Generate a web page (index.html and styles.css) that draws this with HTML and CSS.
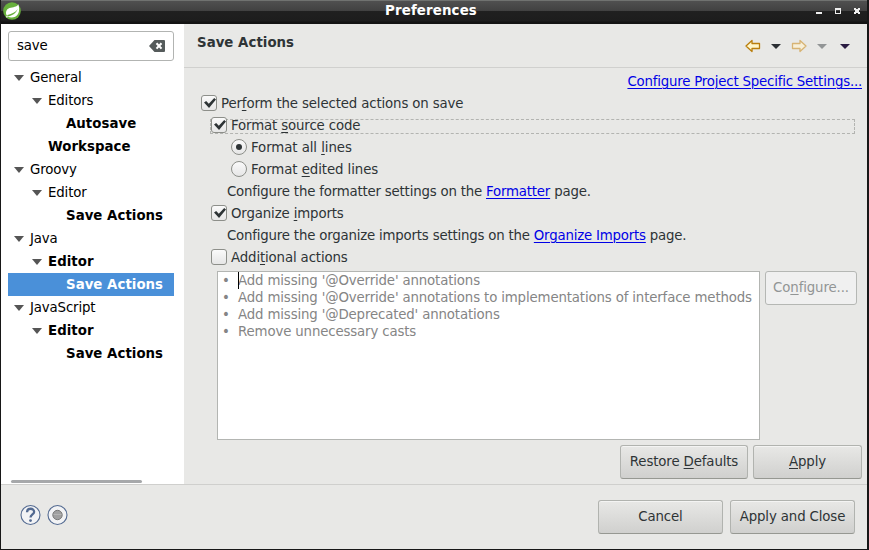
FILE: index.html
```html
<!DOCTYPE html>
<html lang="en">
<head>
<meta charset="utf-8">
<title>Preferences</title>
<link rel="stylesheet" href="styles.css">
</head>
<body>
<div class="window">
  <header class="titlebar">
    <svg class="logo" width="18" height="18" viewBox="0 0 18 18"><circle cx="9" cy="9" r="8.8" fill="#68b03c"/><path d="M15.3 2.2C14 5 10 5 6.500 6C2.500 7.500 2 12 4.600 14.500C8 16.500 13 15.600 15 12C16.700 9 16.300 5 15.300 2.200Z" fill="#fff"/><path d="M4 14.600C9 14 13 11.500 14.700 7C12.500 10.300 9 12 4.500 13Z" fill="#68b03c"/><circle cx="3.900" cy="14.700" r=".8" fill="#fff"/></svg>
    <h1>Preferences</h1>
    <svg class="controls" width="46" height="8" viewBox="0 0 46 8" shape-rendering="crispEdges"><path d="M0 5h6v2H0z" fill="#eee"/><path d="M19 1h6v6h-6zM20 3v3h4V3z" fill="#eee" fill-rule="evenodd"/><path d="M38 1h2v1h2V1h2v2h-1v2h1v2h-2V6h-2v1h-2V5h1V3h-1z" fill="#eee"/></svg>
  </header>
  <div class="body">
    <aside class="sidebar">
      <div class="search"><span>save</span>
        <svg width="16" height="12" viewBox="0 0 16 12"><path d="M5.500 0H15q1 0 1 1v10q0 1-1 1H5.500L0 6z" fill="#555b5b"/><path d="M7.500 3.200l5 5.400M12.500 3.200l-5 5.400" stroke="#fff" stroke-width="2.100"/></svg>
      </div>
      <ul class="tree">
        <li class="l1"><i></i><span>General</span></li>
        <li class="l2"><i></i><span>Editors</span></li>
        <li class="l3 bold"><span>Autosave</span></li>
        <li class="l2 leaf bold"><span>Workspace</span></li>
        <li class="l1"><i></i><span>Groovy</span></li>
        <li class="l2"><i></i><span>Editor</span></li>
        <li class="l3 bold"><span>Save Actions</span></li>
        <li class="l1"><i></i><span>Java</span></li>
        <li class="l2 bold"><i></i><span>Editor</span></li>
        <li class="l3 bold selected"><span>Save Actions</span></li>
        <li class="l1"><i></i><span>JavaScript</span></li>
        <li class="l2 bold"><i></i><span>Editor</span></li>
        <li class="l3 bold"><span>Save Actions</span></li>
      </ul>
      <div class="scrollbar"></div>
    </aside>
    <main class="page">
      <div class="page-head">
        <h2>Save Actions</h2>
        <svg class="nav" width="106" height="14" viewBox="0 0 106 14"><path d="M1 7L7 1.500V4.500H14.500V9.500H7V12.500Z" fill="#fff6ca" stroke="#b97d0c" stroke-width="1.300" stroke-linejoin="round"/><path d="M26 5h10l-5 5z" fill="#2b2f33"/><path d="M61 7L55 1.500V4.500H47.500V9.500H55V12.500Z" fill="#f7efd8" stroke="#d7b373" stroke-width="1.300" stroke-linejoin="round"/><path d="M72 5h10l-5 5z" fill="#929596"/><path d="M95 5h10l-5 5z" fill="#2a1c42"/></svg>
      </div>
      <div class="project"><a>Configure Project Specific Settings...</a></div>
      <div class="options">
        <label class="row"><b class="check on"></b><span>Per<u>f</u>orm the selected actions on save</span></label>
        <label class="row in focus"><b class="check on"></b><span>Format <u>s</u>ource code</span></label>
        <label class="row in2"><b class="radio on"></b><span>Format all <u>l</u>ines</span></label>
        <label class="row in2"><b class="radio"></b><span>Format <u>e</u>dited lines</span></label>
        <p class="row note"><span>Configure the formatter settings on the <a>Formatter</a> page.</span></p>
        <label class="row in"><b class="check on"></b><span>Organize <u>i</u>mports</span></label>
        <p class="row note"><span>Configure the organize imports settings on the <a>Organize Imports</a> page.</span></p>
        <label class="row in"><b class="check"></b><span>Addi<u>t</u>ional actions</span></label>
      </div>
      <div class="extra">
        <ul class="actions">
          <li class="caret">Add missing '@Override' annotations</li>
          <li>Add missing '@Override' annotations to implementations of interface methods</li>
          <li>Add missing '@Deprecated' annotations</li>
          <li>Remove unnecessary casts</li>
        </ul>
        <button class="btn configure" disabled><span>Co<u>n</u>figure...</span></button>
      </div>
      <div class="page-buttons">
        <button class="btn restore"><span>Restore <u>D</u>efaults</span></button>
        <button class="btn apply"><span><u>A</u>pply</span></button>
      </div>
    </main>
  </div>
  <footer class="footer">
    <svg class="help" width="48" height="22" viewBox="0 0 48 22"><g fill="#f2f3f5" stroke="#536a91" stroke-width="1.100"><circle cx="10.500" cy="11" r="9.500"/><circle cx="37.500" cy="11" r="9.500"/></g><path d="M7 8.300C7 3.500 14.300 3.700 14.100 8C14 10.500 10.500 10.500 10.500 13.600" fill="none" stroke="#536a91" stroke-width="2.300"/><circle cx="10.500" cy="16.600" r="1.400" fill="#536a91"/><circle cx="37.500" cy="11" r="4.700" fill="#a0a0a0" stroke="#777"/><path d="M33.500 10.500h8" stroke="#b4b4b4"/></svg>
    <button class="btn dialog"><span>Cancel</span></button>
    <button class="btn dialog"><span>Apply and Close</span></button>
  </footer>
</div>
</body>
</html>
```
FILE: styles.css
```css
* { box-sizing: border-box; }
body { margin: 0; font: 13.33px/16px "DejaVu Sans", sans-serif; letter-spacing: -.14px; color: #2e3436; }
ul, p, h1, h2 { margin: 0; padding: 0; list-style: none; }
a { color: #0000e6; text-decoration: underline; text-underline-offset: 2px; text-decoration-thickness: 1px; }
u { text-underline-offset: 2px; text-decoration-thickness: 1px; }
.window { width: 869px; height: 550px; display: flex; flex-direction: column; background: #e8e8e6; border: solid #171717; border-width: 0 2px 1px 1px; }
.titlebar { height: 24px; display: flex; align-items: flex-start; padding: 2px 5px 0 2px; background: linear-gradient(#707270 0, #707270 1px, #505050 1px, #414141 11px, #202020 11px, #1d1d1d 21px, #131313 22px); flex: none; }
.logo { flex: none; }
.titlebar h1 { flex: 1; text-align: center; font-size: 13.33px; line-height: 16px; color: #fff; padding: 1px 0 0 25px; letter-spacing: .15px; }
.controls { margin-top: 5px; flex: none; }
.body { display: flex; height: 460px; flex: none; }
.sidebar { width: 183px; background: #fff; padding: 7px 10px 0 7px; display: flex; flex-direction: column; }
.search { height: 30px; border: 1px solid #b2b4b2; border-radius: 3px; display: flex; align-items: center; justify-content: space-between; padding: 0 8px; color: #000; flex: none; }
.tree { margin-top: 5px; color: #000; }
.tree li { height: 23px; display: flex; align-items: center; white-space: nowrap; }
.tree i { width: 10px; height: 6px; background: #555; clip-path: polygon(0 0, 100% 0, 50% 100%); margin: 1px 6px 0 0; }
.l1 { padding-left: 6px; }
.l2 { padding-left: 24px; }
.l3 { padding-left: 58px; }
.tree .leaf { padding-left: 40px; }
.bold { font-weight: bold; letter-spacing: .03px; }
.selected { background: #4a90d9; color: #fff; }
.scrollbar { width: 131px; height: 3px; border-radius: 2px; background: #a6a8aa; margin: auto 0 1px 3px; }
.page { flex: 1; min-width: 0; }
.page-head { height: 44px; border-bottom: 1px solid #d0d0ce; display: flex; justify-content: space-between; padding: 10px 16px 0 13px; }
h2 { font-size: 13.33px; line-height: 16px; padding-top: 1px; letter-spacing: .03px; }
.nav { margin-top: 5px; }
.project { text-align: right; height: 24px; padding: 6px 5px 0 0; letter-spacing: -.2px; }
.options { padding-left: 17px; }
.row { height: 22px; display: flex; align-items: center; gap: 4px; white-space: nowrap; }
.row > span { padding-top: 2px; }
.in { padding-left: 10px; }
.in2 { padding-left: 30px; letter-spacing: -.08px; }
.note { padding-left: 26px; letter-spacing: -.197px; }
.check, .radio { width: 16px; height: 16px; border: 1px solid #8d8f8a; border-radius: 3px; background: linear-gradient(#fafafa, #e6e6e6); position: relative; }
.radio { border-radius: 50%; }
.check.on::after { content: ""; position: absolute; left: 2px; top: 2px; width: 12px; height: 10px; background: #2e3436; clip-path: polygon(0 45%, 18% 30%, 40% 58%, 85% 0, 100% 14%, 42% 100%); }
.radio.on::after { content: ""; position: absolute; left: 4px; top: 4px; width: 6px; height: 6px; border-radius: 50%; background: #2e3436; }
.focus { position: relative; }
.focus::before { content: ""; position: absolute; left: 9px; right: 12px; top: 5px; height: 13px; border: 1px dashed #b3b4b1; }
.extra { display: flex; padding-left: 33px; gap: 5px; margin-top: 3px; }
.actions { width: 543px; height: 169px; border: 1px solid #b3b5b2; background: #fff; color: #858585; letter-spacing: -.147px; }
.actions li { height: 17px; line-height: 17px; padding-left: 20px; position: relative; white-space: nowrap; }
.actions li::before { content: "•"; position: absolute; left: 4px; }
.caret::after { content: ""; position: absolute; left: 20px; top: 0; width: 1px; height: 17px; background: #000; }
.btn { height: 34px; padding: 0; font: inherit; letter-spacing: -.13px; color: #2e3436; border: 1px solid #b1b3af; border-bottom-color: #969892; border-radius: 3px; background: linear-gradient(#e8e8e6, #d0d0ce); box-shadow: inset 0 1px #f4f4f3; white-space: nowrap; }
.configure { width: 92px; background: #f0f0f0; color: #929595; border-color: #b5b7b4; box-shadow: none; }
.page-buttons { display: flex; justify-content: flex-end; gap: 5px; padding: 5px 5px 0 0; }
.restore { width: 128px; }
.apply { width: 109px; }
.footer { flex: 1; border-top: 1px solid #cfcfcd; display: flex; padding: 15px 12px 0 18px; gap: 7px; }
.help { margin: 4px auto 0 .5px; }
.dialog { width: 125px; }
```
